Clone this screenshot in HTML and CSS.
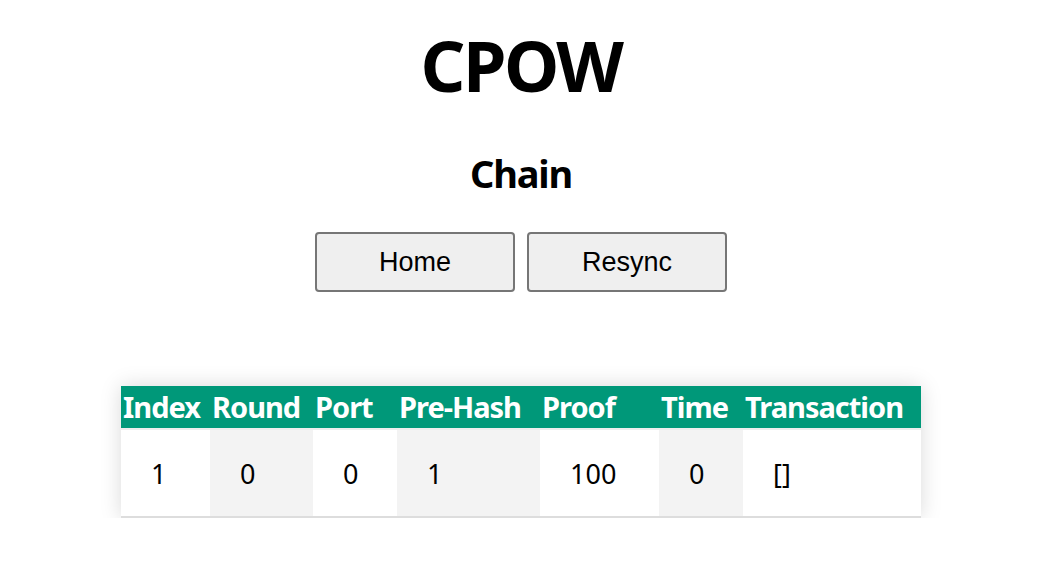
FILE: index.html
```html
<!DOCTYPE html>
<html lang="en">
<head>
<meta charset="utf-8">
<title>CPOW</title>
<link rel="stylesheet" href="styles.css">
</head>
<body>
<h1 class="title">CPOW</h1>
<h2 class="subtitle">Chain</h2>
<div class="actions">
  <button class="btn">Home</button>
  <button class="btn">Resync</button>
</div>
<table class="chain">
  <colgroup>
    <col class="c-index">
    <col class="c-round">
    <col class="c-port">
    <col class="c-prehash">
    <col class="c-proof">
    <col class="c-time">
    <col class="c-tx">
  </colgroup>
  <thead>
    <tr>
      <th>Index</th>
      <th>Round</th>
      <th>Port</th>
      <th>Pre-Hash</th>
      <th>Proof</th>
      <th>Time</th>
      <th>Transaction</th>
    </tr>
  </thead>
  <tbody>
    <tr>
      <td>1</td>
      <td>0</td>
      <td>0</td>
      <td>1</td>
      <td>100</td>
      <td>0</td>
      <td>[]</td>
    </tr>
  </tbody>
</table>
</body>
</html>
```
FILE: styles.css
```css
html, body {
  margin: 0;
  padding: 0;
  background: #fff;
}

body {
  font-family: "Noto Sans", "Open Sans", sans-serif;
  color: #000;
  text-align: center;
}

.title {
  font-size: 70px;
  line-height: 84px;
  font-weight: 700;
  letter-spacing: -2.5px;
  margin: 23px 0 0;
}

.subtitle {
  font-size: 38px;
  line-height: 46px;
  font-weight: 700;
  letter-spacing: -1.2px;
  margin: 43px 0 0;
}

.actions {
  display: flex;
  justify-content: center;
  gap: 12px;
  margin-top: 36px;
}

.btn {
  width: 200px;
  height: 60px;
  box-sizing: border-box;
  background: #efefef;
  border: 2px solid #767676;
  border-radius: 4px;
  font-family: "Liberation Sans", Arial, sans-serif;
  font-size: 27px;
  color: #000;
  padding: 0;
}

.chain {
  width: 800px;
  margin: 94px auto 0;
  border-collapse: collapse;
  table-layout: fixed;
  box-shadow: 0 0 20px rgba(0, 0, 0, 0.15);
  text-align: left;
}

.c-index { width: 89px; }
.c-round { width: 103px; }
.c-port { width: 84px; }
.c-prehash { width: 143px; }
.c-proof { width: 119px; }
.c-time { width: 84px; }
.c-tx { width: 178px; }

.chain thead tr {
  background: #009879;
  color: #fff;
  border-bottom: 2px solid #eeeeee;
}

.chain th {
  height: 42px;
  padding: 0 2px;
  font-size: 29px;
  line-height: 42px;
  font-weight: 700;
  letter-spacing: -1px;
  white-space: nowrap;
}

.chain tbody tr {
  border-bottom: 2px solid #dddddd;
}

.chain td {
  height: 86px;
  padding: 0 0 0 30px;
  font-size: 27px;
  vertical-align: middle;
  background: #fff;
}

.chain td:nth-child(even) {
  background: #f3f3f3;
}
```
